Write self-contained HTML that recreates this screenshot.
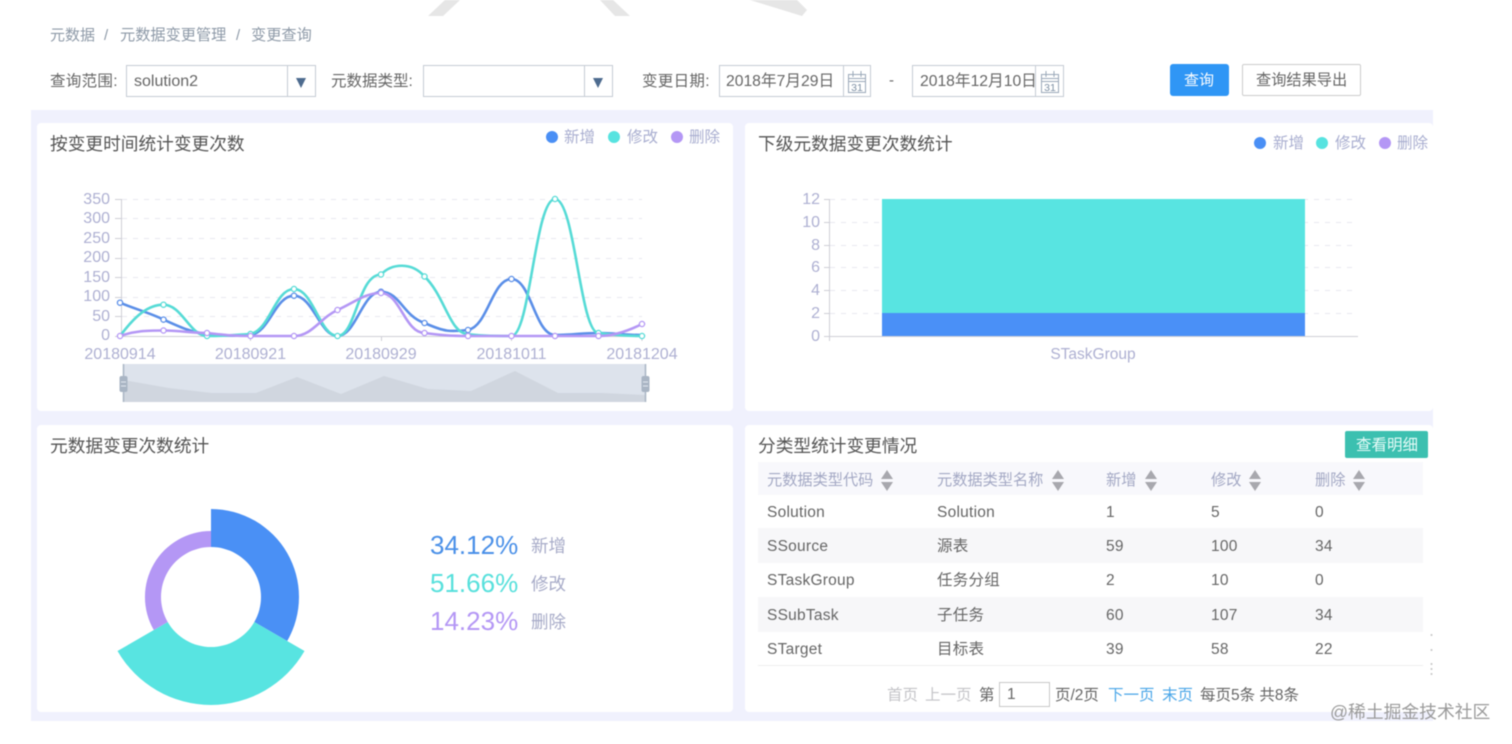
<!DOCTYPE html>
<html lang="zh-CN">
<head>
<meta charset="utf-8">
<title>变更查询</title>
<style>
html,body{margin:0;padding:0;background:#fff;}
#root{position:relative;width:1512px;height:744px;overflow:hidden;background:#fff;font-family:"Liberation Sans","Noto Sans CJK SC",sans-serif;filter:blur(.45px);}
.t{position:absolute;white-space:nowrap;line-height:20px;height:20px;font-size:15px;color:#666;}
.b{position:absolute;box-sizing:border-box;}
.title{font-size:17.7px;color:#555;}
.lg{font-size:15.5px;color:#a9aed0;}
.dot{position:absolute;width:12px;height:12px;border-radius:50%;}
.box{position:absolute;box-sizing:border-box;border:1px solid #c5ccd4;background:#fff;}
.hd{color:#a3a8c4;font-size:15.2px;}
.td{font-size:15.5px;color:#666;letter-spacing:.25px;}
.pg{font-size:15.5px;}
svg{position:absolute;left:0;top:0;}
</style>
</head>
<body>
<div id="root">
  <!-- top fragments -->
  <svg width="1512" height="30" style="z-index:1">
    <polygon points="428,16 443,16 460,0 445,0" fill="#e6e6e6"/>
    <polygon points="600,0 613,0 630,16 615,16" fill="#e6e6e6"/>
    <polygon points="750,0 797,0 807,10 802,16" fill="#e6e6e6"/>
  </svg>

  <!-- breadcrumb -->
  <div class="t" style="left:50px;top:26px;color:#8e9aa8;">元数据</div>
  <div class="t" style="left:104px;top:26px;color:#8e9aa8;">/</div>
  <div class="t" style="left:120px;top:26px;color:#8e9aa8;font-size:15.2px;">元数据变更管理</div>
  <div class="t" style="left:236px;top:26px;color:#8e9aa8;">/</div>
  <div class="t" style="left:251px;top:26px;color:#8e9aa8;font-size:15.2px;">变更查询</div>

  <!-- filters -->
  <div class="t" style="left:50px;top:72px;font-size:15.5px;letter-spacing:.3px;">查询范围:</div>
  <div class="box" style="left:126px;top:65px;width:190px;height:32px;"></div>
  <div class="b" style="left:287px;top:65px;width:1px;height:32px;background:#c5ccd4;"></div>
  <div class="t" style="left:134px;top:72px;font-size:16px;">solution2</div>
  <div class="t" style="left:331px;top:72px;font-size:15.5px;">元数据类型:</div>
  <div class="box" style="left:423px;top:65px;width:190px;height:32px;"></div>
  <div class="b" style="left:584px;top:65px;width:1px;height:32px;background:#c5ccd4;"></div>
  <div class="t" style="left:642px;top:72px;font-size:15.5px;letter-spacing:.3px;">变更日期:</div>
  <div class="box" style="left:719px;top:65px;width:152px;height:32px;"></div>
  <div class="b" style="left:843px;top:65px;width:1px;height:32px;background:#c5ccd4;"></div>
  <div class="t" style="left:726px;top:72px;font-size:15.7px;">2018年7月29日</div>
  <div class="t" style="left:889px;top:71px;">-</div>
  <div class="box" style="left:912px;top:65px;width:152px;height:32px;"></div>
  <div class="t" style="left:920px;top:72px;font-size:15.7px;">2018年12月10日</div>
  <div class="b" style="left:1035px;top:65px;width:1px;height:32px;background:#c5ccd4;"></div>
  <div class="b" style="left:1170px;top:64px;width:59px;height:32px;background:#2f96f5;border-radius:3px;"></div>
  <div class="t" style="left:1184px;top:71px;color:#fff;">查询</div>
  <div class="b" style="left:1242px;top:64px;width:119px;height:32px;background:#fff;border:1px solid #ccc;border-radius:2px;"></div>
  <div class="t" style="left:1256px;top:71px;font-size:15.2px;">查询结果导出</div>

  <!-- panel -->
  <div class="b" style="left:31px;top:110px;width:1402px;height:611px;background:#f0f1fd;"></div>
  <div class="b" style="left:37px;top:123px;width:696px;height:288px;background:#fff;border-radius:4px;"></div>
  <div class="b" style="left:745px;top:123px;width:688px;height:288px;background:#fff;border-radius:4px;"></div>
  <div class="b" style="left:37px;top:425px;width:696px;height:287px;background:#fff;border-radius:4px;"></div>
  <div class="b" style="left:745px;top:425px;width:688px;height:287px;background:#fff;border-radius:4px;"></div>

  <!-- titles -->
  <div class="t title" style="left:50px;top:134px;">按变更时间统计变更次数</div>
  <div class="t title" style="left:758px;top:134px;">下级元数据变更次数统计</div>
  <div class="t title" style="left:50px;top:436px;">元数据变更次数统计</div>
  <div class="t title" style="left:758px;top:436px;">分类型统计变更情况</div>

  <!-- legends -->
  <div class="dot" style="left:546px;top:131px;background:#4a8ff5;"></div>
  <div class="t lg" style="left:564px;top:128px;">新增</div>
  <div class="dot" style="left:608px;top:131px;background:#57e3e0;"></div>
  <div class="t lg" style="left:627px;top:128px;">修改</div>
  <div class="dot" style="left:671px;top:131px;background:#b497f5;"></div>
  <div class="t lg" style="left:689px;top:128px;">删除</div>
  <div class="dot" style="left:1254px;top:137px;background:#4a8ff5;"></div>
  <div class="t lg" style="left:1273px;top:134px;">新增</div>
  <div class="dot" style="left:1316px;top:137px;background:#57e3e0;"></div>
  <div class="t lg" style="left:1335px;top:134px;">修改</div>
  <div class="dot" style="left:1379px;top:137px;background:#b497f5;"></div>
  <div class="t lg" style="left:1397px;top:134px;">删除</div>

  <!-- charts & icons -->
  <svg width="1512" height="744" style="z-index:2">
    <!-- select arrows -->
    <polygon points="296,78 306,78 301,88" fill="#4d6b8f"/>
    <polygon points="593,78 603,78 598,88" fill="#4d6b8f"/>
    <!-- calendar icons -->
    <g fill="none" stroke="#9aa8b8" stroke-width="1">
      <rect x="848.5" y="74.5" width="17" height="18"/>
      <path d="M848.5 78.5H865.5M853 71V77M861 71V77M848.5 81.5H865.5"/>
      <rect x="1041.5" y="74.5" width="17" height="18"/>
      <path d="M1041.5 78.5H1058.5M1046 71V77M1054 71V77M1041.5 81.5H1058.5"/>
    </g>
    <text x="857" y="91" font-size="10.5" text-anchor="middle" fill="#7d8fa3" font-family="Liberation Sans">31</text>
    <text x="1050" y="91" font-size="10.5" text-anchor="middle" fill="#7d8fa3" font-family="Liberation Sans">31</text>

    <!-- line chart grid -->
    <g stroke="#e8e8ef" stroke-width="1" stroke-dasharray="5 6">
      <path d="M122 199.5H642M122 218.5H642M122 238.5H642M122 258.5H642M122 277.5H642M122 297.5H642M122 316.5H642"/>
    </g>
    <g stroke="#cfcfd6" stroke-width="1" fill="none">
      <path d="M121.5 199V337M121 336.5H642M115 199.5H121M115 218.5H121M115 238.5H121M115 258.5H121M115 277.5H121M115 297.5H121M115 316.5H121M115 336.5H121M250.5 336V341M381.5 336V341M511.5 336V341M642 336V341"/>
    </g>
    <g font-family="Liberation Sans" font-size="16" fill="#aeb0d2" text-anchor="end">
      <text x="110" y="204">350</text><text x="110" y="223">300</text><text x="110" y="243">250</text><text x="110" y="262">200</text><text x="110" y="282">150</text><text x="110" y="301">100</text><text x="110" y="321">50</text><text x="110" y="340">0</text>
    </g>
    <g font-family="Liberation Sans" font-size="16" fill="#aeb0d2" text-anchor="middle">
      <text x="120" y="359">20180914</text><text x="250.5" y="359">20180921</text><text x="381" y="359">20180929</text><text x="511.5" y="359">20181011</text><text x="642" y="359">20181204</text>
    </g>

    <!-- slider -->
    <rect x="123" y="364" width="523" height="38" fill="#dde3ec"/>
    <polygon points="123.4,380 168.8,388 212,393 256,393 297,377 341,394 384,376 428,389 471,391 515,371 558,393 602,393 645,395 645,402 123.4,402" fill="#d0d6df"/>
    <path d="M123.5 364V402M645.5 364V402" stroke="#a9b5c4" stroke-width="1.5"/>
    <rect x="119.5" y="376" width="8" height="16" rx="2" fill="#a9b5c4"/>
    <rect x="641.5" y="376" width="8" height="16" rx="2" fill="#a9b5c4"/>
    <path d="M121 382H126M121 386H126M643 382H648M643 386H648" stroke="#e2e8ef" stroke-width="1"/>

    <!-- lines -->
    <g fill="none" stroke-width="2.6">
      <path stroke="#5b8fe8" d="M120 302.7 C135 309 150 313 163.5 319.6 C180 327 190 332 207 334 C225 336 235 336 250.5 335 C270 332 275 295.7 294 295.7 C313 295.7 320 336 337.5 336 C356 336 362 291.8 381 291.8 C400 291.8 403 316 424.5 323 C445 332 450 332 468 330 C488 326 492 279 511.5 279 C531 279 535 335 555 335 C575 335 580 333 598.5 333 C615 333 625 335 642 335"/>
      <path stroke="#56dbd6" d="M120 336 C135 316 148 304.7 163.5 304.7 C182 304.7 190 336 207 336 C225 336 235 335 250.5 334 C270 330 275 289 294 289 C313 289 320 336 337.5 336 C356 336 358 274.5 381 274.5 C392 263 412 262 424.5 276.5 C445 296 450 334 468 334 C480 336 500 336 511.5 336 C530 336 535 199 555 199 C575 199 580 333 598.5 333 C615 335 625 336 642 336"/>
      <path stroke="#b497f5" d="M120 336 C135 331 145 330.5 163.5 330.5 C182 330.5 190 333 207 333 C225 335 235 336 250.5 336 L294 336 C312 336 320 318 337.5 310 C355 302 365 293 381 293 C400 293 405 333 424.5 333 C440 335 450 336 468 336 L598.5 336 C615 336 630 330 642 324"/>
    </g>
    <g fill="#fff" stroke="#5b8fe8" stroke-width="1.3">
      <circle cx="120" cy="302.7" r="2.6"/><circle cx="163.5" cy="319.6" r="2.6"/><circle cx="294" cy="295.7" r="2.6"/><circle cx="381" cy="291.8" r="2.6"/><circle cx="424.5" cy="323" r="2.6"/><circle cx="468" cy="330" r="2.6"/><circle cx="511.5" cy="279" r="2.6"/>
    </g>
    <g fill="#fff" stroke="#56dbd6" stroke-width="1.3">
      <circle cx="163.5" cy="304.7" r="2.6"/><circle cx="207" cy="336" r="2.6"/><circle cx="250.5" cy="334" r="2.6"/><circle cx="294" cy="289" r="2.6"/><circle cx="337.5" cy="336" r="2.6"/><circle cx="381" cy="274.5" r="2.6"/><circle cx="424.5" cy="276.5" r="2.6"/><circle cx="555" cy="199" r="2.6"/><circle cx="598.5" cy="333" r="2.6"/><circle cx="642" cy="336" r="2.6"/>
    </g>
    <g fill="#fff" stroke="#b497f5" stroke-width="1.3">
      <circle cx="120" cy="336" r="2.6"/><circle cx="163.5" cy="330.5" r="2.6"/><circle cx="207" cy="333" r="2.6"/><circle cx="250.5" cy="336" r="2.6"/><circle cx="294" cy="336" r="2.6"/><circle cx="337.5" cy="310" r="2.6"/><circle cx="381" cy="293" r="2.6"/><circle cx="424.5" cy="333" r="2.6"/><circle cx="468" cy="336" r="2.6"/><circle cx="511.5" cy="336" r="2.6"/><circle cx="555" cy="336" r="2.6"/><circle cx="598.5" cy="336" r="2.6"/><circle cx="642" cy="324" r="2.6"/>
    </g>

    <!-- bar chart -->
    <g stroke="#e8e8ef" stroke-width="1" stroke-dasharray="5 6">
      <path d="M830 199.5H1358M830 222.5H1358M830 245.5H1358M830 267.5H1358M830 290.5H1358M830 313.5H1358"/>
    </g>
    <rect x="882" y="199" width="423" height="114" fill="#58e4e1"/>
    <rect x="882" y="313" width="423" height="23" fill="#4a90f7"/>
    <g stroke="#cfcfd6" stroke-width="1" fill="none">
      <path d="M829.5 199V341M824 336.5H1358M824 199.5H830M824 222.5H830M824 245.5H830M824 267.5H830M824 290.5H830M824 313.5H830"/>
    </g>
    <g font-family="Liberation Sans" font-size="16" fill="#aeb0d2" text-anchor="end">
      <text x="820" y="204">12</text><text x="820" y="227">10</text><text x="820" y="250">8</text><text x="820" y="272">6</text><text x="820" y="295">4</text><text x="820" y="318">2</text><text x="820" y="341">0</text>
    </g>
    <text x="1093" y="359" font-family="Liberation Sans" font-size="15.5" fill="#aeb0d2" text-anchor="middle">STaskGroup</text>

    <!-- donut -->
    <path d="M211 509 A88 88 0 0 1 287.2 641 L254.3 622 A50 50 0 0 0 211 547 Z" fill="#4a90f5"/>
    <path d="M304.5 651 A108 108 0 0 1 117.5 651 L167.7 622 A50 50 0 0 0 254.3 622 Z" fill="#58e4e1"/>
    <path d="M153.8 630 A66 66 0 0 1 211 531 L211 547 A50 50 0 0 0 167.7 622 Z" fill="#b497f5"/>

    <!-- sort arrows -->
    <g fill="#a8a8ae">
      <path d="M887 470L893 479H881Z M887 491L893 482H881Z"/>
      <path d="M1058 470L1064 479H1052Z M1058 491L1064 482H1052Z"/>
      <path d="M1151 470L1157 479H1145Z M1151 491L1157 482H1145Z"/>
      <path d="M1255 470L1261 479H1249Z M1255 491L1261 482H1249Z"/>
      <path d="M1359 470L1365 479H1353Z M1359 491L1365 482H1353Z"/>
    </g>
    <!-- stray dots -->
    <g fill="#c4c4c4">
      <circle cx="1431.5" cy="635" r="1"/><circle cx="1431.5" cy="650" r="1"/><circle cx="1431.5" cy="664" r="1"/><circle cx="1431.5" cy="669" r="1"/><circle cx="1431.5" cy="674" r="1"/>
    </g>
  </svg>

  <!-- donut legend -->
  <div class="t" style="left:430px;top:530px;height:30px;line-height:30px;font-size:26px;color:#4a90e8;z-index:3;">34.12%</div>
  <div class="t" style="left:531px;top:536px;font-size:17.5px;color:#a7abc8;z-index:3;">新增</div>
  <div class="t" style="left:430px;top:568px;height:30px;line-height:30px;font-size:26px;color:#57e0dc;z-index:3;">51.66%</div>
  <div class="t" style="left:531px;top:574px;font-size:17.5px;color:#a7abc8;z-index:3;">修改</div>
  <div class="t" style="left:430px;top:606px;height:30px;line-height:30px;font-size:26px;color:#b497f5;z-index:3;">14.23%</div>
  <div class="t" style="left:531px;top:612px;font-size:17.5px;color:#a7abc8;z-index:3;">删除</div>

  <!-- table -->
  <div class="b" style="left:1345px;top:431px;width:83px;height:27px;background:#3cc0b0;border-radius:2px;"></div>
  <div class="t" style="left:1356px;top:436px;color:#e6fbf8;font-size:15.5px;">查看明细</div>
  <div class="b" style="left:758px;top:462px;width:665px;height:33px;background:#f8f8fc;"></div>
  <div class="b" style="left:758px;top:528px;width:665px;height:35px;background:#f7f7f9;"></div>
  <div class="b" style="left:758px;top:597px;width:665px;height:35px;background:#f7f7f9;"></div>
  <div class="b" style="left:758px;top:665px;width:665px;height:1px;background:#eeeeee;"></div>

  <div class="t hd" style="left:767px;top:471px;">元数据类型代码</div>
  <div class="t hd" style="left:937px;top:471px;">元数据类型名称</div>
  <div class="t hd" style="left:1106px;top:471px;">新增</div>
  <div class="t hd" style="left:1211px;top:471px;">修改</div>
  <div class="t hd" style="left:1315px;top:471px;">删除</div>

  <div class="t td" style="left:767px;top:503px;">Solution</div>
  <div class="t td" style="left:937px;top:503px;">Solution</div>
  <div class="t td" style="left:1106px;top:503px;">1</div>
  <div class="t td" style="left:1211px;top:503px;">5</div>
  <div class="t td" style="left:1315px;top:503px;">0</div>

  <div class="t td" style="left:767px;top:537px;">SSource</div>
  <div class="t td" style="left:937px;top:537px;">源表</div>
  <div class="t td" style="left:1106px;top:537px;">59</div>
  <div class="t td" style="left:1211px;top:537px;">100</div>
  <div class="t td" style="left:1315px;top:537px;">34</div>

  <div class="t td" style="left:767px;top:571px;">STaskGroup</div>
  <div class="t td" style="left:937px;top:571px;">任务分组</div>
  <div class="t td" style="left:1106px;top:571px;">2</div>
  <div class="t td" style="left:1211px;top:571px;">10</div>
  <div class="t td" style="left:1315px;top:571px;">0</div>

  <div class="t td" style="left:767px;top:606px;">SSubTask</div>
  <div class="t td" style="left:937px;top:606px;">子任务</div>
  <div class="t td" style="left:1106px;top:606px;">60</div>
  <div class="t td" style="left:1211px;top:606px;">107</div>
  <div class="t td" style="left:1315px;top:606px;">34</div>

  <div class="t td" style="left:767px;top:640px;">STarget</div>
  <div class="t td" style="left:937px;top:640px;">目标表</div>
  <div class="t td" style="left:1106px;top:640px;">39</div>
  <div class="t td" style="left:1211px;top:640px;">58</div>
  <div class="t td" style="left:1315px;top:640px;">22</div>

  <!-- pagination -->
  <div class="t pg" style="left:887px;top:686px;color:#c4c4c8;">首页</div>
  <div class="t pg" style="left:925px;top:686px;color:#c4c4c8;">上一页</div>
  <div class="t pg" style="left:979px;top:686px;">第</div>
  <div class="b" style="left:999px;top:682px;width:51px;height:25px;border:1px solid #c8c8c8;background:#fff;"></div>
  <div class="t pg" style="left:1007px;top:685px;">1</div>
  <div class="t pg" style="left:1055px;top:686px;">页/2页</div>
  <div class="t pg" style="left:1108px;top:686px;color:#4aa6e8;">下一页</div>
  <div class="t pg" style="left:1162px;top:686px;color:#4aa6e8;">末页</div>
  <div class="t pg" style="left:1200px;top:686px;">每页5条 共8条</div>

  <!-- watermark -->
  <div class="t" style="left:1330px;top:702px;font-size:17.8px;color:#9a9a9a;z-index:4;">@稀土掘金技术社区</div>
</div>
</body>
</html>
